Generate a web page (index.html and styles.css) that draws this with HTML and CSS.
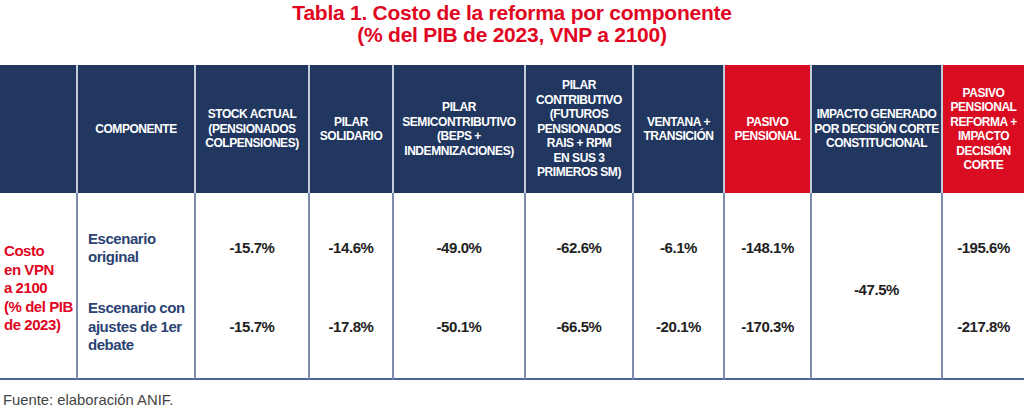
FILE: index.html
```html
<!DOCTYPE html>
<html lang="es">
<head>
<meta charset="utf-8">
<link rel="stylesheet" href="styles.css">
</head>
<body>
<h1 class="title">Tabla 1. Costo de la reforma por componente<br>(% del PIB de 2023, VNP a 2100)</h1>
<table class="tbl">
  <colgroup>
    <col style="width:76px"><col style="width:118px"><col style="width:114px"><col style="width:84px"><col style="width:132px"><col style="width:108px"><col style="width:91px"><col style="width:87px"><col style="width:131px"><col style="width:83px">
  </colgroup>
  <thead>
    <tr>
      <th class="first"></th>
      <th>COMPONENTE</th>
      <th>STOCK ACTUAL<br>(PENSIONADOS<br>COLPENSIONES)</th>
      <th>PILAR<br>SOLIDARIO</th>
      <th>PILAR<br>SEMICONTRIBUTIVO<br>(BEPS +<br>INDEMNIZACIONES)</th>
      <th>PILAR<br>CONTRIBUTIVO<br>(FUTUROS<br>PENSIONADOS<br>RAIS + RPM<br>EN SUS 3<br>PRIMEROS SM)</th>
      <th>VENTANA +<br>TRANSICIÓN</th>
      <th class="red">PASIVO<br>PENSIONAL</th>
      <th>IMPACTO GENERADO<br>POR DECISIÓN CORTE<br>CONSTITUCIONAL</th>
      <th class="red">PASIVO<br>PENSIONAL<br>REFORMA +<br>IMPACTO<br>DECISIÓN<br>CORTE</th>
    </tr>
  </thead>
  <tbody>
    <tr class="r1">
      <td class="first side" rowspan="2">Costo<br>en VPN<br>a 2100<br>(% del PIB<br>de 2023)</td>
      <td class="label">Escenario<br>original</td>
      <td>-15.7%</td>
      <td>-14.6%</td>
      <td>-49.0%</td>
      <td>-62.6%</td>
      <td>-6.1%</td>
      <td>-148.1%</td>
      <td class="mid" rowspan="2">-47.5%</td>
      <td>-195.6%</td>
    </tr>
    <tr class="r2">
      <td class="label">Escenario con<br>ajustes de 1er<br>debate</td>
      <td>-15.7%</td>
      <td>-17.8%</td>
      <td>-50.1%</td>
      <td>-66.5%</td>
      <td>-20.1%</td>
      <td>-170.3%</td>
      <td>-217.8%</td>
    </tr>
  </tbody>
</table>
<p class="source">Fuente: elaboración ANIF.</p>
</body>
</html>
```
FILE: styles.css
```css
html, body {
  margin: 0;
  padding: 0;
  background: #ffffff;
}
body {
  width: 1024px;
  height: 409px;
  overflow: hidden;
  font-family: "Liberation Sans Narrow", "Liberation Sans", Arial, sans-serif;
}
.title {
  margin: 0;
  padding-top: 2px;
  height: 65px;
  box-sizing: border-box;
  text-align: center;
  color: #e0061f;
  font-size: 21px;
  line-height: 22px;
  font-weight: bold;
  letter-spacing: -0.25px;
}
.tbl {
  width: 1024px;
  table-layout: fixed;
  border-collapse: separate;
  border-spacing: 0;
}
.tbl th {
  height: 128px;
  padding: 0;
  box-sizing: border-box;
  background: #21375f;
  color: #ffffff;
  font-size: 12px;
  line-height: 14.5px;
  font-weight: bold;
  letter-spacing: -0.45px;
  white-space: nowrap;
  text-align: center;
  vertical-align: middle;
  border-left: 2px solid #c3cbd9;
}
.tbl th.red {
  background: #d90c21;
}
.tbl th.first {
  border-left: none;
}
.tbl td {
  padding: 0 2px;
  border-left: 2px solid #7c8cae;
  font-size: 15px;
  line-height: 18.5px;
  font-weight: bold;
  letter-spacing: -0.45px;
  white-space: nowrap;
  color: #222222;
  text-align: center;
  vertical-align: middle;
}
.tbl tr.r1 td {
  height: 94px;
  padding-top: 16px;
  box-sizing: border-box;
}
.tbl tr.r2 td {
  height: 93px;
  padding-bottom: 11px;
  box-sizing: border-box;
}
.tbl tr.r2 td, .tbl td.first, .tbl td.mid {
  border-bottom: 2px solid #4d6595;
}
.tbl tr.r1 td.first {
  border-left: none;
  color: #e0061f;
  text-align: left;
  padding: 6px 0 0 4px;
}
.tbl tr.r1 td.mid {
  padding: 9px 0 0 0;
}
.tbl td.label {
  color: #2b4373;
  text-align: left;
  padding-left: 10px;
}
.source {
  margin: 11px 0 0 3px;
  font-family: "Liberation Sans", Arial, sans-serif;
  font-size: 14.8px;
  line-height: 18px;
  color: #444444;
}
```
